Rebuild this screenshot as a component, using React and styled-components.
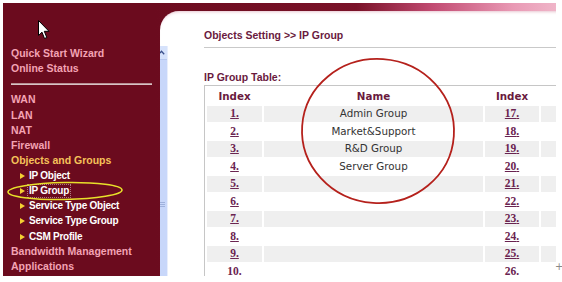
import React from 'react';
import styled, { createGlobalStyle } from 'styled-components';

const GlobalStyle = createGlobalStyle`
    html, body {
        margin: 0;
        padding: 0;
        background: #ffffff;
    }
    body {
        font-family: "Liberation Sans", Arial, sans-serif;
        width: 562px;
        height: 282px;
        overflow: hidden;
        position: relative;
    }
`;

const Page = styled.div`
    display: flex;
    flex-direction: row;
    margin: 3px 0 0 3px;
    width: 553px;
    height: 273px;
    background: #6b0b1e;
    overflow: hidden;
    position: relative;
`;

const Sidebar = styled.nav`
    position: relative;
    width: 152px;
    flex-shrink: 0;
    padding: 43px 0 0 8px;
    box-sizing: border-box;
    display: flex;
    flex-direction: column;
`;

const MenuLink = styled.div`
    flex-shrink: 0;
    font-family: "Liberation Sans", Arial, sans-serif;
    font-weight: bold;
    font-size: 10.5px;
    line-height: 15.2px;
    height: 15.2px;
    white-space: nowrap;
    color: ${props => props.active ? '#f5c25a' : '#f3a3b4'};
`;

const Divider = styled.div`
    flex-shrink: 0;
    height: 2px;
    width: 141px;
    margin: 7px 0 7px 0;
    background: #d8c4c6;
    border-top: 1px solid #b89094;
    box-sizing: border-box;
`;

const SubLink = styled.div`
    flex-shrink: 0;
    display: flex;
    align-items: center;
    gap: 3px;
    padding-left: 9px;
    font-family: "Liberation Sans", Arial, sans-serif;
    font-weight: bold;
    font-size: 10px;
    letter-spacing: -0.25px;
    line-height: 15.2px;
    height: 15.2px;
    white-space: nowrap;
    color: #ffffff;
`;

const Arrow = styled.span`
    width: 0;
    height: 0;
    border-top: 3.5px solid transparent;
    border-bottom: 3.5px solid transparent;
    border-left: 5px solid #f4cf32;
`;

const SubText = styled.span`
    padding: 0 1px;
    line-height: 12px;
    outline: ${props => props.focused ? '1px dotted rgba(255,255,255,0.45)' : 'none'};
`;

const Highlight = styled.svg`
    position: absolute;
    left: 2px;
    top: 177px;
    pointer-events: none;
`;

const Main = styled.div`
    flex: 1;
    display: flex;
    flex-direction: column;
    background: linear-gradient(to right, #6b0b1e 0%, #7a1228 45%, #c24b72 62%, #e99ab5 80%, #f6d3de 100%);
`;

const Panel = styled.div`
    flex: 1;
    display: flex;
    flex-direction: row;
    margin: 8px 0 0 5px;
    background: #ffffff;
    border-top-left-radius: 19px;
    box-shadow: inset 0 3px 3px -2px rgba(190, 90, 120, 0.35);
    overflow: hidden;
    position: relative;
`;

const ScrollTrack = styled.div`
    width: 13px;
    margin: 35px 0 0 -5px;
    flex-shrink: 0;
    display: flex;
    flex-direction: column;
    align-items: center;
    background: #c8d7fa;
    border-left: 1px solid #dce6fd;
    border-right: 1px solid #e8eefc;
    box-sizing: border-box;
`;

const ScrollButton = styled.div`
    width: 11px;
    height: 14px;
    display: flex;
    align-items: center;
    justify-content: center;
    background: #d6e2fb;
    border-bottom: 1px solid #b8c8ee;
    box-sizing: border-box;
`;

const Grip = styled.div`
    margin-top: 142px;
    width: 6px;
    height: 5px;
    border-top: 1px solid #9fb1dc;
    border-bottom: 1px solid #9fb1dc;
    position: relative;
    box-sizing: border-box;
    &::after {
        content: '';
        position: absolute;
        left: 0;
        right: 0;
        top: 1px;
        border-top: 1px solid #9fb1dc;
    }
`;

const Content = styled.div`
    flex: 1;
    padding: 17px 0 0 36px;
    min-width: 0;
`;

const Heading = styled.div`
    font-family: "Liberation Sans", Arial, sans-serif;
    font-weight: bold;
    font-size: 10.5px;
    line-height: 14px;
    color: #6a1a3e;
    padding-bottom: 5px;
    border-bottom: 1px solid #c9c9c9;
    white-space: nowrap;
`;

const TableTitle = styled.div`
    margin: 22px 0 1px 0;
    font-family: "Liberation Sans", Arial, sans-serif;
    font-weight: bold;
    font-size: 10.5px;
    line-height: 14px;
    color: #6a1a3e;
    white-space: nowrap;
`;

const GroupTable = styled.table`
    table-layout: fixed;
    width: 399px;
    border-collapse: separate;
    border-spacing: 2px;
    border-top: 1px solid #c6c6c6;
    border-left: 1px solid #c6c6c6;
    font-size: 10px;
`;

const HeadCell = styled.th`
    height: 16px;
    padding: 0;
    font-family: "DejaVu Sans", Verdana, sans-serif;
    font-weight: bold;
    font-size: 10.3px;
    line-height: 16px;
    color: #6a1a3e;
    text-align: center;
`;

const Cell = styled.td`
    height: 15.5px;
    padding: 0;
    text-align: center;
    font-size: 10px;
    line-height: 12px;
    background: ${props => props.shaded ? '#efefef' : '#ffffff'};
    white-space: nowrap;
`;

const IndexLink = styled.span`
    font-family: "Liberation Serif", "Times New Roman", serif;
    font-weight: bold;
    font-size: 11.5px;
    line-height: 12px;
    color: #6a2350;
    text-decoration: underline;
`;

const GroupName = styled.span`
    font-family: "DejaVu Sans", Verdana, sans-serif;
    font-size: 10.3px;
    line-height: 12px;
    color: #333333;
`;

const Circle = styled.svg`
    position: absolute;
    left: 138px;
    top: 44px;
    pointer-events: none;
`;

const Pointer = styled.svg`
    position: absolute;
    left: 38px;
    top: 20px;
`;

const CrossMark = styled.span`
    position: absolute;
    left: 555px;
    top: 261px;
    font-family: "DejaVu Sans", sans-serif;
    font-size: 10px;
    color: #888888;
`;

const groups = ['Admin Group', 'Market&Support', 'R&D Group', 'Server Group'];
const rows = Array.from({ length: 10 }, (_, i) => ({
    left: i + 1,
    name: groups[i] || '',
    right: i + 17,
}));

class App extends React.Component {
    render() {
        return (
            <>
                <GlobalStyle />
                <Page>
                    <Sidebar>
                        <MenuLink>Quick Start Wizard</MenuLink>
                        <MenuLink>Online Status</MenuLink>
                        <Divider />
                        <MenuLink>WAN</MenuLink>
                        <MenuLink>LAN</MenuLink>
                        <MenuLink>NAT</MenuLink>
                        <MenuLink>Firewall</MenuLink>
                        <MenuLink active>Objects and Groups</MenuLink>
                        <SubLink><Arrow /><SubText>IP Object</SubText></SubLink>
                        <SubLink><Arrow /><SubText focused>IP Group</SubText></SubLink>
                        <SubLink><Arrow /><SubText>Service Type Object</SubText></SubLink>
                        <SubLink><Arrow /><SubText>Service Type Group</SubText></SubLink>
                        <SubLink><Arrow /><SubText>CSM Profile</SubText></SubLink>
                        <MenuLink>Bandwidth Management</MenuLink>
                        <MenuLink>Applications</MenuLink>
                        <MenuLink>VPN and Remote Access</MenuLink>
                        <Highlight width="120" height="22" viewBox="0 0 120 22">
                            <ellipse cx="60" cy="11" rx="57" ry="8.5" fill="none" stroke="#e8e12a" strokeWidth="1.6" transform="rotate(-1 60 11)" />
                        </Highlight>
                    </Sidebar>
                    <Main>
                        <Panel>
                            <ScrollTrack>
                                <ScrollButton>
                                    <svg width="7" height="5" viewBox="0 0 7 5">
                                        <path d="M0.8 4.2 L3.5 1.3 L6.2 4.2" fill="none" stroke="#3a4f8a" strokeWidth="1.3" />
                                    </svg>
                                </ScrollButton>
                                <Grip />
                            </ScrollTrack>
                            <Content>
                                <Heading>Objects Setting &gt;&gt; IP Group</Heading>
                                <TableTitle>IP Group Table:</TableTitle>
                                <GroupTable>
                                    <colgroup>
                                        <col style={{ width: 55 }} />
                                        <col style={{ width: 219 }} />
                                        <col style={{ width: 54 }} />
                                        <col style={{ width: 60 }} />
                                    </colgroup>
                                    <thead>
                                        <tr>
                                            <HeadCell>Index</HeadCell>
                                            <HeadCell>Name</HeadCell>
                                            <HeadCell>Index</HeadCell>
                                            <HeadCell></HeadCell>
                                        </tr>
                                    </thead>
                                    <tbody>
                                        {rows.map((row, i) => (
                                            <tr key={row.left}>
                                                <Cell shaded={i % 2 === 0}><IndexLink>{row.left}.</IndexLink></Cell>
                                                <Cell shaded={i % 2 === 0}><GroupName>{row.name}</GroupName></Cell>
                                                <Cell shaded={i % 2 === 0}><IndexLink>{row.right}.</IndexLink></Cell>
                                                <Cell shaded={i % 2 === 0}></Cell>
                                            </tr>
                                        ))}
                                    </tbody>
                                </GroupTable>
                            </Content>
                            <Circle width="160" height="154" viewBox="0 0 160 154">
                                <ellipse cx="80" cy="76" rx="76" ry="72" fill="none" stroke="#b5211c" strokeWidth="1.8" transform="rotate(4 80 76)" />
                            </Circle>
                        </Panel>
                    </Main>
                </Page>
                <Pointer width="12" height="20" viewBox="0 0 12 20">
                    <path d="M0.5 0.5 L0.5 15.5 L4 12.2 L6.5 18.5 L8.8 17.5 L6.3 11.3 L11 11.3 Z" fill="#ffffff" stroke="#000000" strokeWidth="1" strokeLinejoin="round" />
                </Pointer>
                <CrossMark>+</CrossMark>
            </>
        );
    }
}

export default App;
